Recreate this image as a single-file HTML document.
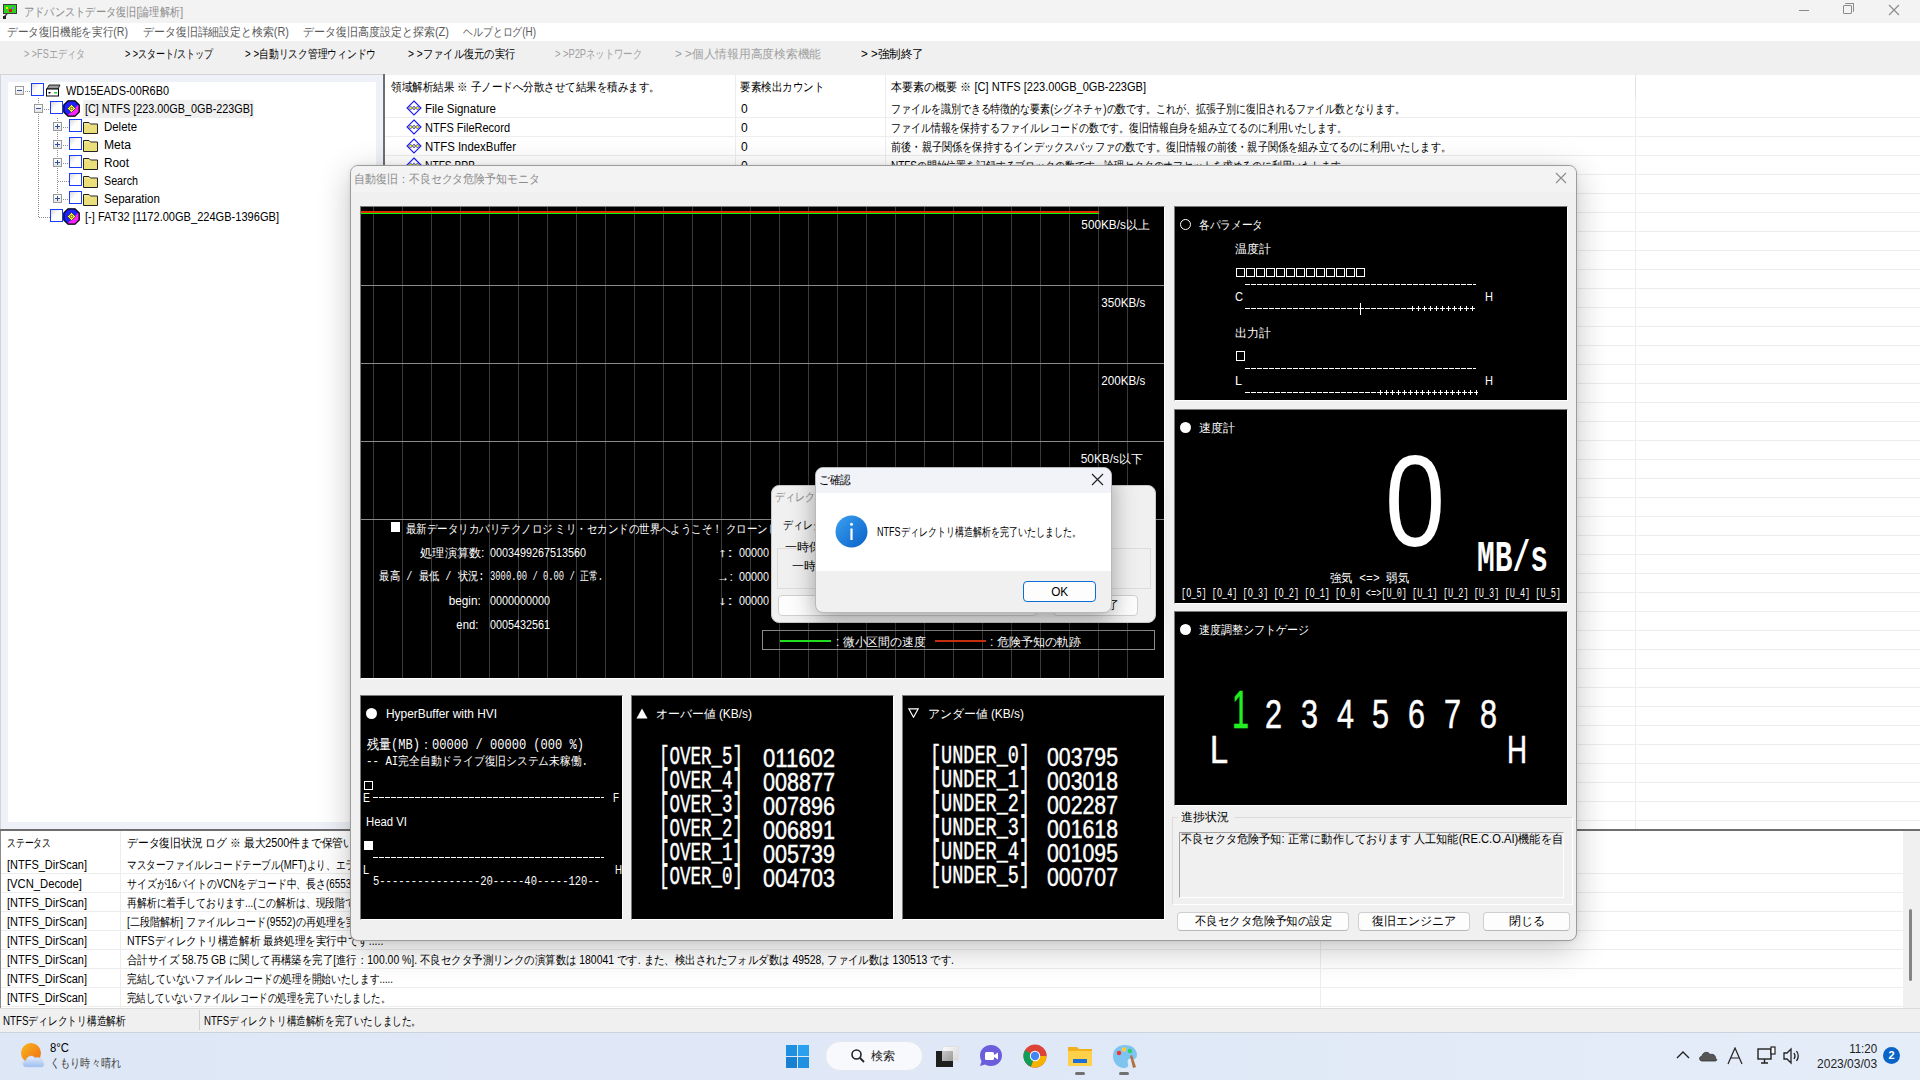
<!DOCTYPE html>
<html><head><meta charset="utf-8">
<style>
*{margin:0;padding:0;box-sizing:border-box}
html,body{width:1920px;height:1080px;overflow:hidden;background:#f0f0f0;font-family:"Liberation Sans",sans-serif;font-size:12px;color:#000;position:relative}
.a{position:absolute}
.t{position:absolute;white-space:nowrap;line-height:1}
</style></head><body>
<div class="a" style="left:0px;top:0px;width:1920px;height:23px;background:#f3f3f3"></div>
<div class="a" style="left:0px;top:23px;width:1920px;height:18px;background:#fff"></div>
<div class="a" style="left:0px;top:41px;width:1920px;height:33px;background:#f0f0f0"></div>
<svg class="a" style="left:2px;top:3px" width="16" height="16" viewBox="0 0 16 16"><rect x="1.5" y="1.5" width="13" height="9" fill="#2fd11f" stroke="#3a3a3a"/><rect x="4" y="4" width="2" height="2" fill="#ffe000"/><rect x="10" y="4" width="2" height="2" fill="#7a5cff"/><rect x="7" y="6" width="3" height="3" fill="#e01010"/><path d="M5 11 L2 14" stroke="#444" stroke-width="1.5"/><rect x="1" y="13" width="3" height="3" fill="#222"/></svg>
<div class="t" id="t0" style="left:24px;transform-origin:left center;top:5.5px;font-size:12px;font-family:'Liberation Sans',sans-serif;color:#8c8c8c;transform:scale(0.8518,1.0000);">アドバンストデータ復旧[論理解析]</div>
<div class="a" style="left:1799px;top:10px;width:10px;height:1px;background:#8a8a8a"></div>
<div class="a" style="left:1843px;top:5px;width:9px;height:9px;border:1px solid #8a8a8a;border-radius:1px"></div><div class="a" style="left:1845px;top:3px;width:9px;height:9px;border-top:1px solid #8a8a8a;border-right:1px solid #8a8a8a;border-radius:1px"></div>
<svg class="a" style="left:1888px;top:4px" width="12" height="12"><path d="M1 1L11 11M11 1L1 11" stroke="#8a8a8a" stroke-width="1.1"/></svg>
<div class="t" id="t1" style="left:7px;transform-origin:left center;top:26.0px;font-size:12px;font-family:'Liberation Sans',sans-serif;color:#5a5a5a;transform:scale(0.8853,1.0000);">データ復旧機能を実行(R)</div>
<div class="t" id="t2" style="left:143px;transform-origin:left center;top:26.0px;font-size:12px;font-family:'Liberation Sans',sans-serif;color:#5a5a5a;transform:scale(0.9087,1.0000);">データ復旧詳細設定と検索(R)</div>
<div class="t" id="t3" style="left:303px;transform-origin:left center;top:26.0px;font-size:12px;font-family:'Liberation Sans',sans-serif;color:#5a5a5a;transform:scale(0.9163,1.0000);">データ復旧高度設定と探索(Z)</div>
<div class="t" id="t4" style="left:463px;transform-origin:left center;top:26.0px;font-size:12px;font-family:'Liberation Sans',sans-serif;color:#5a5a5a;transform:scale(0.8233,1.0000);">ヘルプとログ(H)</div>
<div class="t" id="t5" style="left:24px;transform-origin:left center;top:47.5px;font-size:12px;font-family:'Liberation Sans',sans-serif;color:#a0a0a0;transform:scale(0.7560,1.0000);">&gt; &gt;FSエディタ</div>
<div class="t" id="t6" style="left:125px;transform-origin:left center;top:47.5px;font-size:12px;font-family:'Liberation Sans',sans-serif;color:#000;transform:scale(0.7542,1.0000);">&gt; &gt;スタート/ストップ</div>
<div class="t" id="t7" style="left:245px;transform-origin:left center;top:47.5px;font-size:12px;font-family:'Liberation Sans',sans-serif;color:#000;transform:scale(0.8119,1.0000);">&gt; &gt;自動リスク管理ウィンドウ</div>
<div class="t" id="t8" style="left:408px;transform-origin:left center;top:47.5px;font-size:12px;font-family:'Liberation Sans',sans-serif;color:#000;transform:scale(0.8535,1.0000);">&gt; &gt;ファイル復元の実行</div>
<div class="t" id="t9" style="left:555px;transform-origin:left center;top:47.5px;font-size:12px;font-family:'Liberation Sans',sans-serif;color:#a0a0a0;transform:scale(0.7766,1.0000);">&gt; &gt;P2Pネットワーク</div>
<div class="t" id="t10" style="left:675px;transform-origin:left center;top:47.5px;font-size:12px;font-family:'Liberation Sans',sans-serif;color:#a0a0a0;transform:scale(0.9775,1.0000);">&gt; &gt;個人情報用高度検索機能</div>
<div class="t" id="t11" style="left:861px;transform-origin:left center;top:47.5px;font-size:12px;font-family:'Liberation Sans',sans-serif;color:#000;transform:scale(0.9639,1.0000);">&gt; &gt;強制終了</div>
<div class="a" style="left:0px;top:74px;width:384px;height:1px;background:#d4d4d4"></div>
<div class="a" style="left:0px;top:75px;width:383px;height:754px;background:#eef1f7"></div>
<div class="a" style="left:8px;top:82px;width:368px;height:740px;background:#fff"></div>
<div class="a" style="left:0px;top:75px;width:1px;height:754px;background:#d4d4d4"></div>
<div class="a" style="left:383px;top:74px;width:2px;height:755px;background:#6e6e6e"></div>
<div class="a" style="left:385px;top:75px;width:1535px;height:754px;background:#fff"></div>
<div class="a" style="left:385px;top:117px;width:1535px;height:1px;background:#ededed"></div>
<div class="a" style="left:385px;top:136px;width:1535px;height:1px;background:#ededed"></div>
<div class="a" style="left:385px;top:155px;width:1535px;height:1px;background:#ededed"></div>
<div class="a" style="left:385px;top:174px;width:1535px;height:1px;background:#ededed"></div>
<div class="a" style="left:385px;top:193px;width:1535px;height:1px;background:#ededed"></div>
<div class="a" style="left:385px;top:212px;width:1535px;height:1px;background:#ededed"></div>
<div class="a" style="left:385px;top:231px;width:1535px;height:1px;background:#ededed"></div>
<div class="a" style="left:385px;top:250px;width:1535px;height:1px;background:#ededed"></div>
<div class="a" style="left:385px;top:269px;width:1535px;height:1px;background:#ededed"></div>
<div class="a" style="left:385px;top:288px;width:1535px;height:1px;background:#ededed"></div>
<div class="a" style="left:385px;top:307px;width:1535px;height:1px;background:#ededed"></div>
<div class="a" style="left:385px;top:326px;width:1535px;height:1px;background:#ededed"></div>
<div class="a" style="left:385px;top:345px;width:1535px;height:1px;background:#ededed"></div>
<div class="a" style="left:385px;top:364px;width:1535px;height:1px;background:#ededed"></div>
<div class="a" style="left:385px;top:383px;width:1535px;height:1px;background:#ededed"></div>
<div class="a" style="left:385px;top:402px;width:1535px;height:1px;background:#ededed"></div>
<div class="a" style="left:385px;top:421px;width:1535px;height:1px;background:#ededed"></div>
<div class="a" style="left:385px;top:440px;width:1535px;height:1px;background:#ededed"></div>
<div class="a" style="left:385px;top:459px;width:1535px;height:1px;background:#ededed"></div>
<div class="a" style="left:385px;top:478px;width:1535px;height:1px;background:#ededed"></div>
<div class="a" style="left:385px;top:497px;width:1535px;height:1px;background:#ededed"></div>
<div class="a" style="left:385px;top:516px;width:1535px;height:1px;background:#ededed"></div>
<div class="a" style="left:385px;top:535px;width:1535px;height:1px;background:#ededed"></div>
<div class="a" style="left:385px;top:554px;width:1535px;height:1px;background:#ededed"></div>
<div class="a" style="left:385px;top:573px;width:1535px;height:1px;background:#ededed"></div>
<div class="a" style="left:385px;top:592px;width:1535px;height:1px;background:#ededed"></div>
<div class="a" style="left:385px;top:611px;width:1535px;height:1px;background:#ededed"></div>
<div class="a" style="left:385px;top:630px;width:1535px;height:1px;background:#ededed"></div>
<div class="a" style="left:385px;top:649px;width:1535px;height:1px;background:#ededed"></div>
<div class="a" style="left:385px;top:668px;width:1535px;height:1px;background:#ededed"></div>
<div class="a" style="left:385px;top:687px;width:1535px;height:1px;background:#ededed"></div>
<div class="a" style="left:385px;top:706px;width:1535px;height:1px;background:#ededed"></div>
<div class="a" style="left:385px;top:725px;width:1535px;height:1px;background:#ededed"></div>
<div class="a" style="left:385px;top:744px;width:1535px;height:1px;background:#ededed"></div>
<div class="a" style="left:385px;top:763px;width:1535px;height:1px;background:#ededed"></div>
<div class="a" style="left:385px;top:782px;width:1535px;height:1px;background:#ededed"></div>
<div class="a" style="left:385px;top:801px;width:1535px;height:1px;background:#ededed"></div>
<div class="a" style="left:385px;top:820px;width:1535px;height:1px;background:#ededed"></div>
<div class="a" style="left:735px;top:75px;width:1px;height:754px;background:#ededed"></div>
<div class="a" style="left:885px;top:75px;width:1px;height:754px;background:#ededed"></div>
<div class="a" style="left:1635px;top:75px;width:1px;height:754px;background:#ededed"></div>
<div class="a" style="left:1635px;top:75px;width:1px;height:23px;background:#e4e4e4"></div>
<div class="t" id="t12" style="left:391px;transform-origin:left center;top:80.5px;font-size:12px;font-family:'Liberation Sans',sans-serif;color:#000;transform:scale(0.8772,1.0000);">領域解析結果 ※ 子ノードへ分散させて結果を積みます。</div>
<div class="t" id="t13" style="left:740px;transform-origin:left center;top:80.5px;font-size:12px;font-family:'Liberation Sans',sans-serif;color:#000;transform:scale(0.8750,1.0000);">要素検出カウント</div>
<div class="t" id="t14" style="left:891px;transform-origin:left center;top:80.5px;font-size:12px;font-family:'Liberation Sans',sans-serif;color:#000;transform:scale(0.9214,1.0000);">本要素の概要 ※ [C] NTFS [223.00GB_0GB-223GB]</div>
<svg class="a" style="left:406px;top:100px" width="16" height="16" viewBox="0 0 16 16"><path d="M8 1L15 8L8 15L1 8Z" fill="none" stroke="#1a1aff" stroke-width="1.1"/><path d="M2.5 8L4.5 6L6.5 8L8 6L9.5 8L11.5 6L13.5 8L11.5 10L9.5 8L8 10L6.5 8L4.5 10Z" fill="#f5f500" stroke="#1a1aff" stroke-width="0.7"/></svg>
<div class="t" id="t15" style="left:425px;transform-origin:left center;top:103.0px;font-size:12px;font-family:'Liberation Sans',sans-serif;color:#000;transform:scale(0.9589,1.0000);">File Signature</div>
<div class="t" id="t16" style="left:741px;transform-origin:left center;top:103.0px;font-size:12px;font-family:'Liberation Sans',sans-serif;color:#000;">0</div>
<div class="t" id="t17" style="left:891px;transform-origin:left center;top:103.0px;font-size:12px;font-family:'Liberation Sans',sans-serif;color:#000;transform:scale(0.8290,1.0000);">ファイルを識別できる特徴的な要素(シグネチャ)の数です。これが、拡張子別に復旧されるファイル数となります。</div>
<svg class="a" style="left:406px;top:119px" width="16" height="16" viewBox="0 0 16 16"><path d="M8 1L15 8L8 15L1 8Z" fill="none" stroke="#1a1aff" stroke-width="1.1"/><path d="M2.5 8L4.5 6L6.5 8L8 6L9.5 8L11.5 6L13.5 8L11.5 10L9.5 8L8 10L6.5 8L4.5 10Z" fill="#f5f500" stroke="#1a1aff" stroke-width="0.7"/></svg>
<div class="t" id="t18" style="left:425px;transform-origin:left center;top:122.0px;font-size:12px;font-family:'Liberation Sans',sans-serif;color:#000;transform:scale(0.9171,1.0000);">NTFS FileRecord</div>
<div class="t" id="t19" style="left:741px;transform-origin:left center;top:122.0px;font-size:12px;font-family:'Liberation Sans',sans-serif;color:#000;">0</div>
<div class="t" id="t20" style="left:891px;transform-origin:left center;top:122.0px;font-size:12px;font-family:'Liberation Sans',sans-serif;color:#000;transform:scale(0.8261,1.0000);">ファイル情報を保持するファイルレコードの数です。復旧情報自身を組み立てるのに利用いたします。</div>
<svg class="a" style="left:406px;top:138px" width="16" height="16" viewBox="0 0 16 16"><path d="M8 1L15 8L8 15L1 8Z" fill="none" stroke="#1a1aff" stroke-width="1.1"/><path d="M2.5 8L4.5 6L6.5 8L8 6L9.5 8L11.5 6L13.5 8L11.5 10L9.5 8L8 10L6.5 8L4.5 10Z" fill="#f5f500" stroke="#1a1aff" stroke-width="0.7"/></svg>
<div class="t" id="t21" style="left:425px;transform-origin:left center;top:141.0px;font-size:12px;font-family:'Liberation Sans',sans-serif;color:#000;transform:scale(0.9496,1.0000);">NTFS IndexBuffer</div>
<div class="t" id="t22" style="left:741px;transform-origin:left center;top:141.0px;font-size:12px;font-family:'Liberation Sans',sans-serif;color:#000;">0</div>
<div class="t" id="t23" style="left:891px;transform-origin:left center;top:141.0px;font-size:12px;font-family:'Liberation Sans',sans-serif;color:#000;transform:scale(0.8485,1.0000);">前後・親子関係を保持するインデックスバッファの数です。復旧情報の前後・親子関係を組み立てるのに利用いたします。</div>
<svg class="a" style="left:406px;top:157px" width="16" height="16" viewBox="0 0 16 16"><path d="M8 1L15 8L8 15L1 8Z" fill="none" stroke="#1a1aff" stroke-width="1.1"/><path d="M2.5 8L4.5 6L6.5 8L8 6L9.5 8L11.5 6L13.5 8L11.5 10L9.5 8L8 10L6.5 8L4.5 10Z" fill="#f5f500" stroke="#1a1aff" stroke-width="0.7"/></svg>
<div class="t" id="t24" style="left:425px;transform-origin:left center;top:160.0px;font-size:12px;font-family:'Liberation Sans',sans-serif;color:#000;transform:scale(0.8520,1.0000);">NTFS BPB</div>
<div class="t" id="t25" style="left:741px;transform-origin:left center;top:160.0px;font-size:12px;font-family:'Liberation Sans',sans-serif;color:#000;">0</div>
<div class="t" id="t26" style="left:891px;transform-origin:left center;top:160.0px;font-size:12px;font-family:'Liberation Sans',sans-serif;color:#000;transform:scale(0.8224,1.0000);">NTFSの開始位置を記録するブロックの数です。論理セクタのオフセットを求めるのに利用いたします。</div>
<div class="a" style="left:15px;top:86px;width:9px;height:9px;border:1px solid #9a9a9a;background:linear-gradient(#fff,#e4e4e4)"></div><div class="a" style="left:17px;top:90px;width:5px;height:1px;background:#3050a0"></div>
<div class="a" style="left:25px;top:91px;width:6px;height:1px;background:repeating-linear-gradient(90deg,#909090 0 1px,transparent 1px 2px)"></div>
<div class="a" style="left:31px;top:83px;width:13px;height:13px;border:1px solid #1a3cff;background:linear-gradient(135deg,#d8d8d8,#fff 45%)"></div>
<svg class="a" style="left:46px;top:84px" width="15" height="13" viewBox="0 0 15 13"><path d="M3 1H14L12 5H1Z" fill="#999" stroke="#000" stroke-width="0.8"/><rect x="0.5" y="5" width="12" height="7" fill="#fff" stroke="#000"/><rect x="8" y="8" width="3" height="1.5" fill="#20d020"/><rect x="2.5" y="8" width="2" height="1.5" fill="#000"/></svg>
<div class="t" id="t27" style="left:66px;transform-origin:left center;top:85.0px;font-size:12px;font-family:'Liberation Sans',sans-serif;color:#000;transform:scale(0.9084,1.0000);">WD15EADS-00R6B0</div>
<div class="a" style="left:38px;top:98px;width:1px;height:120px;background:repeating-linear-gradient(180deg,#909090 0 1px,transparent 1px 2px)"></div>
<div class="a" style="left:34px;top:104px;width:9px;height:9px;border:1px solid #9a9a9a;background:linear-gradient(#fff,#e4e4e4)"></div><div class="a" style="left:36px;top:108px;width:5px;height:1px;background:#3050a0"></div>
<div class="a" style="left:44px;top:109px;width:6px;height:1px;background:repeating-linear-gradient(90deg,#909090 0 1px,transparent 1px 2px)"></div>
<div class="a" style="left:83px;top:100px;width:171px;height:18px;background:#f0f0f0"></div>
<div class="a" style="left:50px;top:101px;width:13px;height:13px;border:1px solid #1a3cff;background:linear-gradient(135deg,#d8d8d8,#fff 45%)"></div>
<svg class="a" style="left:63px;top:100px" width="17" height="17" viewBox="0 0 17 17"><defs><clipPath id="oc63100"><path d="M5 0.8H12L16.2 5V12L12 16.2H5L0.8 12V5Z"/></clipPath></defs><g clip-path="url(#oc63100)"><rect width="17" height="17" fill="#2020ff"/><path d="M17 3L3 17H17Z" fill="#ff20ff"/></g><path d="M5 0.8H12L16.2 5V12L12 16.2H5L0.8 12V5Z" fill="none" stroke="#000" stroke-width="1.3"/><path d="M8.5 4.5L12.5 8.5L8.5 12.5L4.5 8.5Z" fill="#ffff30" stroke="#333" stroke-width="0.8"/><circle cx="8.5" cy="8.5" r="1.3" fill="none" stroke="#333" stroke-width="0.8"/></svg>
<div class="t" id="t28" style="left:85px;transform-origin:left center;top:103.0px;font-size:12px;font-family:'Liberation Sans',sans-serif;color:#000;transform:scale(0.9028,1.0000);">[C] NTFS [223.00GB_0GB-223GB]</div>
<div class="a" style="left:57px;top:118px;width:1px;height:82px;background:repeating-linear-gradient(180deg,#909090 0 1px,transparent 1px 2px)"></div>
<div class="a" style="left:53px;top:122px;width:9px;height:9px;border:1px solid #9a9a9a;background:linear-gradient(#fff,#e4e4e4)"></div><div class="a" style="left:55px;top:126px;width:5px;height:1px;background:#3050a0"></div><div class="a" style="left:57px;top:124px;width:1px;height:5px;background:#3050a0"></div>
<div class="a" style="left:63px;top:127px;width:6px;height:1px;background:repeating-linear-gradient(90deg,#909090 0 1px,transparent 1px 2px)"></div>
<div class="a" style="left:69px;top:119px;width:13px;height:13px;border:1px solid #1a3cff;background:linear-gradient(135deg,#d8d8d8,#fff 45%)"></div>
<svg class="a" style="left:83px;top:120px" width="16" height="14" viewBox="0 0 16 14"><path d="M0.5 2.5H6L7.5 4H14.5V13.5H0.5Z" fill="#f0e890" stroke="#222"/><rect x="1" y="5" width="13" height="8" fill="#eadf7a"/></svg>
<div class="t" id="t29" style="left:104px;transform-origin:left center;top:121.0px;font-size:12px;font-family:'Liberation Sans',sans-serif;color:#000;transform:scale(0.9514,1.0000);">Delete</div>
<div class="a" style="left:53px;top:140px;width:9px;height:9px;border:1px solid #9a9a9a;background:linear-gradient(#fff,#e4e4e4)"></div><div class="a" style="left:55px;top:144px;width:5px;height:1px;background:#3050a0"></div><div class="a" style="left:57px;top:142px;width:1px;height:5px;background:#3050a0"></div>
<div class="a" style="left:63px;top:145px;width:6px;height:1px;background:repeating-linear-gradient(90deg,#909090 0 1px,transparent 1px 2px)"></div>
<div class="a" style="left:69px;top:137px;width:13px;height:13px;border:1px solid #1a3cff;background:linear-gradient(135deg,#d8d8d8,#fff 45%)"></div>
<svg class="a" style="left:83px;top:138px" width="16" height="14" viewBox="0 0 16 14"><path d="M0.5 2.5H6L7.5 4H14.5V13.5H0.5Z" fill="#f0e890" stroke="#222"/><rect x="1" y="5" width="13" height="8" fill="#eadf7a"/></svg>
<div class="t" id="t30" style="left:104px;transform-origin:left center;top:139.0px;font-size:12px;font-family:'Liberation Sans',sans-serif;color:#000;transform:scale(1.0117,1.0000);">Meta</div>
<div class="a" style="left:53px;top:158px;width:9px;height:9px;border:1px solid #9a9a9a;background:linear-gradient(#fff,#e4e4e4)"></div><div class="a" style="left:55px;top:162px;width:5px;height:1px;background:#3050a0"></div><div class="a" style="left:57px;top:160px;width:1px;height:5px;background:#3050a0"></div>
<div class="a" style="left:63px;top:163px;width:6px;height:1px;background:repeating-linear-gradient(90deg,#909090 0 1px,transparent 1px 2px)"></div>
<div class="a" style="left:69px;top:155px;width:13px;height:13px;border:1px solid #1a3cff;background:linear-gradient(135deg,#d8d8d8,#fff 45%)"></div>
<svg class="a" style="left:83px;top:156px" width="16" height="14" viewBox="0 0 16 14"><path d="M0.5 2.5H6L7.5 4H14.5V13.5H0.5Z" fill="#f0e890" stroke="#222"/><rect x="1" y="5" width="13" height="8" fill="#eadf7a"/></svg>
<div class="t" id="t31" style="left:104px;transform-origin:left center;top:157.0px;font-size:12px;font-family:'Liberation Sans',sans-serif;color:#000;transform:scale(0.9858,1.0000);">Root</div>
<div class="a" style="left:58px;top:181px;width:11px;height:1px;background:repeating-linear-gradient(90deg,#909090 0 1px,transparent 1px 2px)"></div>
<div class="a" style="left:69px;top:173px;width:13px;height:13px;border:1px solid #1a3cff;background:linear-gradient(135deg,#d8d8d8,#fff 45%)"></div>
<svg class="a" style="left:83px;top:174px" width="16" height="14" viewBox="0 0 16 14"><path d="M0.5 2.5H6L7.5 4H14.5V13.5H0.5Z" fill="#f0e890" stroke="#222"/><rect x="1" y="5" width="13" height="8" fill="#eadf7a"/></svg>
<div class="t" id="t32" style="left:104px;transform-origin:left center;top:175.0px;font-size:12px;font-family:'Liberation Sans',sans-serif;color:#000;transform:scale(0.8940,1.0000);">Search</div>
<div class="a" style="left:53px;top:194px;width:9px;height:9px;border:1px solid #9a9a9a;background:linear-gradient(#fff,#e4e4e4)"></div><div class="a" style="left:55px;top:198px;width:5px;height:1px;background:#3050a0"></div><div class="a" style="left:57px;top:196px;width:1px;height:5px;background:#3050a0"></div>
<div class="a" style="left:63px;top:199px;width:6px;height:1px;background:repeating-linear-gradient(90deg,#909090 0 1px,transparent 1px 2px)"></div>
<div class="a" style="left:69px;top:191px;width:13px;height:13px;border:1px solid #1a3cff;background:linear-gradient(135deg,#d8d8d8,#fff 45%)"></div>
<svg class="a" style="left:83px;top:192px" width="16" height="14" viewBox="0 0 16 14"><path d="M0.5 2.5H6L7.5 4H14.5V13.5H0.5Z" fill="#f0e890" stroke="#222"/><rect x="1" y="5" width="13" height="8" fill="#eadf7a"/></svg>
<div class="t" id="t33" style="left:104px;transform-origin:left center;top:193.0px;font-size:12px;font-family:'Liberation Sans',sans-serif;color:#000;transform:scale(0.9647,1.0000);">Separation</div>
<div class="a" style="left:39px;top:217px;width:11px;height:1px;background:repeating-linear-gradient(90deg,#909090 0 1px,transparent 1px 2px)"></div>
<div class="a" style="left:50px;top:209px;width:13px;height:13px;border:1px solid #1a3cff;background:linear-gradient(135deg,#d8d8d8,#fff 45%)"></div>
<svg class="a" style="left:63px;top:208px" width="17" height="17" viewBox="0 0 17 17"><defs><clipPath id="oc63208"><path d="M5 0.8H12L16.2 5V12L12 16.2H5L0.8 12V5Z"/></clipPath></defs><g clip-path="url(#oc63208)"><rect width="17" height="17" fill="#2020ff"/><path d="M17 3L3 17H17Z" fill="#ff20ff"/></g><path d="M5 0.8H12L16.2 5V12L12 16.2H5L0.8 12V5Z" fill="none" stroke="#000" stroke-width="1.3"/><path d="M8.5 4.5L12.5 8.5L8.5 12.5L4.5 8.5Z" fill="#ffff30" stroke="#333" stroke-width="0.8"/><circle cx="8.5" cy="8.5" r="1.3" fill="none" stroke="#333" stroke-width="0.8"/></svg>
<div class="t" id="t34" style="left:85px;transform-origin:left center;top:211.0px;font-size:12px;font-family:'Liberation Sans',sans-serif;color:#000;transform:scale(0.9222,1.0000);">[-] FAT32 [1172.00GB_224GB-1396GB]</div>
<div class="a" style="left:0px;top:829px;width:1920px;height:2px;background:#6e6e6e"></div>
<div class="a" style="left:0px;top:831px;width:1920px;height:177px;background:#fff"></div>
<div class="a" style="left:0px;top:831px;width:1px;height:177px;background:#8a8a8a"></div>
<div class="a" style="left:1px;top:873px;width:1902px;height:1px;background:#ededed"></div>
<div class="a" style="left:1px;top:892px;width:1902px;height:1px;background:#ededed"></div>
<div class="a" style="left:1px;top:911px;width:1902px;height:1px;background:#ededed"></div>
<div class="a" style="left:1px;top:930px;width:1902px;height:1px;background:#ededed"></div>
<div class="a" style="left:1px;top:949px;width:1902px;height:1px;background:#ededed"></div>
<div class="a" style="left:1px;top:968px;width:1902px;height:1px;background:#ededed"></div>
<div class="a" style="left:1px;top:987px;width:1902px;height:1px;background:#ededed"></div>
<div class="a" style="left:1px;top:1006px;width:1902px;height:1px;background:#ededed"></div>
<div class="a" style="left:120px;top:831px;width:1px;height:177px;background:#ededed"></div>
<div class="a" style="left:1320px;top:855px;width:1px;height:153px;background:#ededed"></div>
<div class="t" id="t35" style="left:7px;transform-origin:left center;top:836.5px;font-size:12px;font-family:'Liberation Sans',sans-serif;color:#000;transform:scale(0.7333,1.0000);">ステータス</div>
<div class="t" id="t36" style="left:127px;transform-origin:left center;top:836.5px;font-size:12px;font-family:'Liberation Sans',sans-serif;color:#000;transform:scale(0.8979,1.0000);">データ復旧状況 ログ ※ 最大2500件まで保管いたします</div>
<div class="t" id="t37" style="left:7px;transform-origin:left center;top:858.5px;font-size:12px;font-family:'Liberation Sans',sans-serif;color:#000;transform:scale(0.9158,1.0000);">[NTFS_DirScan]</div>
<div class="t" id="t38" style="left:127px;transform-origin:left center;top:858.5px;font-size:12px;font-family:'Liberation Sans',sans-serif;color:#000;transform:scale(0.8000,1.0000);">マスターファイルレコードテーブル(MFT)より、エラーを検出いたしました</div>
<div class="t" id="t39" style="left:7px;transform-origin:left center;top:877.5px;font-size:12px;font-family:'Liberation Sans',sans-serif;color:#000;transform:scale(0.9370,1.0000);">[VCN_Decode]</div>
<div class="t" id="t40" style="left:127px;transform-origin:left center;top:877.5px;font-size:12px;font-family:'Liberation Sans',sans-serif;color:#000;transform:scale(0.8200,1.0000);">サイズが16バイトのVCNをデコード中、長さ(65536)</div>
<div class="t" id="t41" style="left:7px;transform-origin:left center;top:896.5px;font-size:12px;font-family:'Liberation Sans',sans-serif;color:#000;transform:scale(0.9158,1.0000);">[NTFS_DirScan]</div>
<div class="t" id="t42" style="left:127px;transform-origin:left center;top:896.5px;font-size:12px;font-family:'Liberation Sans',sans-serif;color:#000;transform:scale(0.8200,1.0000);">再解析に着手しております...(この解析は、現段階では</div>
<div class="t" id="t43" style="left:7px;transform-origin:left center;top:915.5px;font-size:12px;font-family:'Liberation Sans',sans-serif;color:#000;transform:scale(0.9158,1.0000);">[NTFS_DirScan]</div>
<div class="t" id="t44" style="left:127px;transform-origin:left center;top:915.5px;font-size:12px;font-family:'Liberation Sans',sans-serif;color:#000;transform:scale(0.8400,1.0000);">[二段階解析] ファイルレコード(9552)の再処理を実行</div>
<div class="t" id="t45" style="left:7px;transform-origin:left center;top:934.5px;font-size:12px;font-family:'Liberation Sans',sans-serif;color:#000;transform:scale(0.9158,1.0000);">[NTFS_DirScan]</div>
<div class="t" id="t46" style="left:127px;transform-origin:left center;top:934.5px;font-size:12px;font-family:'Liberation Sans',sans-serif;color:#000;transform:scale(0.8800,1.0000);">NTFSディレクトリ構造解析 最終処理を実行中です.....</div>
<div class="t" id="t47" style="left:7px;transform-origin:left center;top:953.5px;font-size:12px;font-family:'Liberation Sans',sans-serif;color:#000;transform:scale(0.9158,1.0000);">[NTFS_DirScan]</div>
<div class="t" id="t48" style="left:127px;transform-origin:left center;top:953.5px;font-size:12px;font-family:'Liberation Sans',sans-serif;color:#000;transform:scale(0.8685,1.0000);">合計サイズ 58.75 GB に関して再構築を完了[進行：100.00 %]. 不良セクタ予測リンクの演算数は 180041 です. また、検出されたフォルダ数は 49528, ファイル数は 130513 です.</div>
<div class="t" id="t49" style="left:7px;transform-origin:left center;top:972.5px;font-size:12px;font-family:'Liberation Sans',sans-serif;color:#000;transform:scale(0.9158,1.0000);">[NTFS_DirScan]</div>
<div class="t" id="t50" style="left:127px;transform-origin:left center;top:972.5px;font-size:12px;font-family:'Liberation Sans',sans-serif;color:#000;transform:scale(0.8093,1.0000);">完結していないファイルレコードの処理を開始いたします.....</div>
<div class="t" id="t51" style="left:7px;transform-origin:left center;top:991.5px;font-size:12px;font-family:'Liberation Sans',sans-serif;color:#000;transform:scale(0.9158,1.0000);">[NTFS_DirScan]</div>
<div class="t" id="t52" style="left:127px;transform-origin:left center;top:991.5px;font-size:12px;font-family:'Liberation Sans',sans-serif;color:#000;transform:scale(0.7827,1.0000);">完結していないファイルレコードの処理を完了いたしました。</div>
<div class="a" style="left:1903px;top:831px;width:17px;height:177px;background:#f0f0f0"></div>
<div class="a" style="left:1909px;top:909px;width:3px;height:72px;background:#858585;border-radius:2px"></div>
<div class="a" style="left:0px;top:1008px;width:1920px;height:24px;background:#f0f0f0"></div>
<div class="a" style="left:0px;top:1008px;width:1920px;height:1px;background:#dadada"></div>
<div class="a" style="left:199px;top:1010px;width:1px;height:20px;background:#d0d0d0"></div>
<div class="t" id="t53" style="left:3px;transform-origin:left center;top:1014.5px;font-size:12px;font-family:'Liberation Sans',sans-serif;color:#000;transform:scale(0.8127,1.0000);">NTFSディレクトリ構造解析</div>
<div class="t" id="t54" style="left:204px;transform-origin:left center;top:1014.5px;font-size:12px;font-family:'Liberation Sans',sans-serif;color:#000;transform:scale(0.7997,1.0000);">NTFSディレクトリ構造解析を完了いたしました。</div>
<div class="a" style="left:0px;top:1032px;width:1920px;height:48px;background:linear-gradient(90deg,#dde7f5 0%,#e0e8f7 35%,#dfe8f6 55%,#e5edf9 100%);border-top:1px solid #cbd3dd"></div>
<svg class="a" style="left:18px;top:1040px" width="28" height="30" viewBox="0 0 28 30"><defs><linearGradient id="sg" x1="0" y1="0" x2="1" y2="1"><stop offset="0" stop-color="#f8b820"/><stop offset="1" stop-color="#f06a10"/></linearGradient><linearGradient id="cg" x1="0" y1="0" x2="0" y2="1"><stop offset="0" stop-color="#e4eefc"/><stop offset="1" stop-color="#9dbdf0"/></linearGradient></defs><circle cx="13" cy="13" r="10" fill="url(#sg)"/><path d="M8 27C4 27 4 21 8 20.5C8.5 16 14.5 14.5 17 18C19.5 16.5 24 18 24 21.5C26.5 22 26.5 27 23.5 27Z" fill="url(#cg)" stroke="#b8cff2" stroke-width="0.6"/></svg>
<div class="t" id="t55" style="left:50px;transform-origin:left center;top:1042.0px;font-size:12px;font-family:'Liberation Sans',sans-serif;color:#000;transform:scale(0.9434,1.0000);">8°C</div>
<div class="t" id="t56" style="left:50px;transform-origin:left center;top:1057.0px;font-size:12px;font-family:'Liberation Sans',sans-serif;color:#444;transform:scale(0.8452,1.0000);">くもり時々晴れ</div>
<svg class="a" style="left:786px;top:1045px" width="23" height="23" viewBox="0 0 23 23"><rect x="0" y="0" width="11" height="11" fill="#1e90e0"/><rect x="12" y="0" width="11" height="11" fill="#2aa0f0"/><rect x="0" y="12" width="11" height="11" fill="#1880d0"/><rect x="12" y="12" width="11" height="11" fill="#2090e0"/></svg>
<div class="a" style="left:825px;top:1041px;width:98px;height:30px;border-radius:15px;background:#f7f9fc;border:1px solid #e3e8ef"></div>
<svg class="a" style="left:851px;top:1049px" width="14" height="14" viewBox="0 0 14 14"><circle cx="5.5" cy="5.5" r="4.5" fill="none" stroke="#222" stroke-width="1.6"/><path d="M9 9L13 13" stroke="#222" stroke-width="1.8"/></svg>
<div class="t" id="t57" style="left:871px;transform-origin:left center;top:1050.0px;font-size:12px;font-family:'Liberation Sans',sans-serif;color:#222;">検索</div>
<div class="a" style="left:942px;top:1046px;width:17px;height:15px;background:linear-gradient(135deg,#fafafa,#d8d8d8);border:1px solid #e0e0e0"></div><div class="a" style="left:936px;top:1051px;width:17px;height:16px;background:#1e1e1e"></div><div class="a" style="left:942px;top:1051px;width:11px;height:10px;background:linear-gradient(135deg,#c8c8c8,#9a9a9a)"></div>
<svg class="a" style="left:979px;top:1044px" width="24" height="24" viewBox="0 0 24 24"><path d="M12 1C18 1 23 5.5 23 11.5S18 22 12 22C10 22 8 21.5 6 20.5L1 22L2.5 17.5C1.5 15.5 1 13.5 1 11.5C1 5.5 6 1 12 1Z" fill="#6b5ddb"/><rect x="6" y="8" width="9" height="8" rx="1.5" fill="#fff"/><path d="M15 11L19 8.5V15.5L15 13Z" fill="#fff"/></svg>
<svg class="a" style="left:1023px;top:1044px" width="24" height="24" viewBox="0 0 24 24"><circle cx="12" cy="12" r="11.5" fill="#db4437"/><path d="M12 12L2 6.2A11.5 11.5 0 0 0 8 22.8Z" fill="#0f9d58"/><path d="M12 12L8 22.8A11.5 11.5 0 0 0 23.5 12H12Z" fill="#f4b400"/><path d="M12 12L23.5 12A11.5 11.5 0 0 0 22 6.2Z" fill="#db4437"/><circle cx="12" cy="12" r="5.2" fill="#fff"/><circle cx="12" cy="12" r="4.2" fill="#4285f4"/></svg>
<svg class="a" style="left:1067px;top:1044px" width="26" height="24" viewBox="0 0 26 24"><path d="M1 3H10L12 5H25V22H1Z" fill="#f2b01e"/><rect x="1" y="7" width="24" height="15" fill="#ffd04a"/><rect x="6" y="15" width="14" height="4" fill="#1e6fd9"/></svg>
<div class="a" style="left:1075px;top:1072px;width:10px;height:3px;background:#707070;border-radius:2px"></div>
<svg class="a" style="left:1112px;top:1043px" width="26" height="26" viewBox="0 0 26 26"><path d="M13 2C20 2 25 6 25 12C25 16 22 17 19 16C16 15 15 18 16 21C17 24 14 25 12 25C6 25 1 20 1 13C1 6 6 2 13 2Z" fill="#7ec4f0"/><circle cx="7" cy="10" r="2.2" fill="#e33"/><circle cx="12" cy="6.5" r="2.2" fill="#fc3"/><circle cx="18" cy="8" r="2.2" fill="#3c6"/><path d="M20 12L24 24L21 25L18 13Z" fill="#b07040"/></svg>
<div class="a" style="left:1119px;top:1072px;width:10px;height:3px;background:#707070;border-radius:2px"></div>
<svg class="a" style="left:1676px;top:1050px" width="14" height="10"><path d="M1 8L7 2L13 8" fill="none" stroke="#222" stroke-width="1.4"/></svg>
<svg class="a" style="left:1698px;top:1048px" width="20" height="14" viewBox="0 0 20 14"><path d="M4 13C1 13 0.5 8.5 4 8.2C4.5 4 10 3 12 6.5C15 5.5 18 7.5 17.5 10.5C19.5 11 19 13 17 13Z" fill="#555" stroke="#333" stroke-width="0.8"/></svg>
<svg class="a" style="left:1727px;top:1047px" width="16" height="18" viewBox="0 0 16 18"><path d="M1 17L8 1L15 17M3.8 11H12.2" fill="none" stroke="#222" stroke-width="1.2"/></svg>
<svg class="a" style="left:1757px;top:1046px" width="20" height="20" viewBox="0 0 20 20"><rect x="1" y="3" width="13" height="10" fill="none" stroke="#222" stroke-width="1.4"/><path d="M7.5 13V17M4 17H11" stroke="#222" stroke-width="1.4"/><rect x="14" y="1" width="4" height="7" fill="#fff" stroke="#222" stroke-width="1.2"/></svg>
<svg class="a" style="left:1782px;top:1047px" width="20" height="18" viewBox="0 0 20 18"><path d="M2 6H5L9 2V16L5 12H2Z" fill="none" stroke="#222" stroke-width="1.3"/><path d="M12 6Q14 9 12 12M14.5 4Q18 9 14.5 14" fill="none" stroke="#222" stroke-width="1.3"/></svg>
<div class="t" id="t58" style="right:43px;transform-origin:right center;top:1042.5px;font-size:12px;font-family:'Liberation Sans',sans-serif;color:#222;transform:scale(0.9609,1.0000);">11:20</div>
<div class="t" id="t59" style="right:43px;transform-origin:right center;top:1057.5px;font-size:12px;font-family:'Liberation Sans',sans-serif;color:#222;transform:scale(0.9990,1.0000);">2023/03/03</div>
<div class="a" style="left:1883px;top:1047px;width:17px;height:17px;border-radius:50%;background:#0a64c8;color:#fff;font-size:11px;line-height:17px;text-align:center;font-weight:bold">2</div>
<div class="a" style="left:350px;top:165px;width:1227px;height:776px;background:#f0f0f0;border:1px solid #9c9c9c;border-radius:8px;box-shadow:0 8px 32px rgba(0,0,0,.24),0 0 4px rgba(0,0,0,.08)"></div>
<div class="a" style="left:351px;top:166px;width:1225px;height:26px;background:#f3f3f3;border-radius:7px 7px 0 0"></div>
<div class="t" id="t60" style="left:354px;transform-origin:left center;top:172.5px;font-size:12px;font-family:'Liberation Sans',sans-serif;color:#8c8c8c;transform:scale(0.9118,1.0000);">自動復旧：不良セクタ危険予知モニタ</div>
<svg class="a" style="left:1555px;top:172px" width="12" height="12"><path d="M1 1L11 11M11 1L1 11" stroke="#8a8a8a" stroke-width="1.1"/></svg>
<div class="a" style="left:360px;top:206px;width:805px;height:473px;background:#000;border-left:1px solid #7a7a7a;border-top:1px solid #7a7a7a;border-right:1px solid #fff;border-bottom:1px solid #fff"></div>
<div class="a" style="left:373px;top:207px;width:1px;height:471px;background:#3a3a3a"></div><div class="a" style="left:402px;top:207px;width:1px;height:471px;background:#3a3a3a"></div><div class="a" style="left:431px;top:207px;width:1px;height:471px;background:#3a3a3a"></div><div class="a" style="left:460px;top:207px;width:1px;height:471px;background:#3a3a3a"></div><div class="a" style="left:489px;top:207px;width:1px;height:471px;background:#3a3a3a"></div><div class="a" style="left:518px;top:207px;width:1px;height:471px;background:#3a3a3a"></div><div class="a" style="left:547px;top:207px;width:1px;height:471px;background:#3a3a3a"></div><div class="a" style="left:576px;top:207px;width:1px;height:471px;background:#3a3a3a"></div><div class="a" style="left:605px;top:207px;width:1px;height:471px;background:#3a3a3a"></div><div class="a" style="left:634px;top:207px;width:1px;height:471px;background:#3a3a3a"></div><div class="a" style="left:663px;top:207px;width:1px;height:471px;background:#3a3a3a"></div><div class="a" style="left:692px;top:207px;width:1px;height:471px;background:#3a3a3a"></div><div class="a" style="left:721px;top:207px;width:1px;height:471px;background:#3a3a3a"></div><div class="a" style="left:750px;top:207px;width:1px;height:471px;background:#3a3a3a"></div><div class="a" style="left:779px;top:207px;width:1px;height:471px;background:#3a3a3a"></div><div class="a" style="left:808px;top:207px;width:1px;height:471px;background:#3a3a3a"></div><div class="a" style="left:837px;top:207px;width:1px;height:471px;background:#3a3a3a"></div><div class="a" style="left:866px;top:207px;width:1px;height:471px;background:#3a3a3a"></div><div class="a" style="left:895px;top:207px;width:1px;height:471px;background:#3a3a3a"></div><div class="a" style="left:924px;top:207px;width:1px;height:471px;background:#3a3a3a"></div><div class="a" style="left:953px;top:207px;width:1px;height:471px;background:#3a3a3a"></div><div class="a" style="left:982px;top:207px;width:1px;height:471px;background:#3a3a3a"></div><div class="a" style="left:1011px;top:207px;width:1px;height:471px;background:#3a3a3a"></div><div class="a" style="left:1040px;top:207px;width:1px;height:471px;background:#3a3a3a"></div><div class="a" style="left:1069px;top:207px;width:1px;height:471px;background:#3a3a3a"></div><div class="a" style="left:1098px;top:207px;width:1px;height:471px;background:#3a3a3a"></div><div class="a" style="left:1127px;top:207px;width:1px;height:471px;background:#3a3a3a"></div>
<div class="a" style="left:361px;top:285px;width:803px;height:1px;background:#8a8a8a"></div>
<div class="a" style="left:361px;top:363px;width:803px;height:1px;background:#8a8a8a"></div>
<div class="a" style="left:361px;top:441px;width:803px;height:1px;background:#8a8a8a"></div>
<div class="a" style="left:361px;top:519px;width:803px;height:1px;background:#8a8a8a"></div>
<div class="a" style="left:361px;top:211px;width:738px;height:2px;background:#e03000"></div>
<div class="a" style="left:361px;top:213px;width:738px;height:1px;background:#00ff00"></div>
<div class="t" id="t61" style="right:771px;transform-origin:right center;top:218.5px;font-size:12px;font-family:'Liberation Sans',sans-serif;color:#fff;transform:scale(0.9802,1.0000);">500KB/s以上</div>
<div class="t" id="t62" style="right:775px;transform-origin:right center;top:296.5px;font-size:12px;font-family:'Liberation Sans',sans-serif;color:#fff;transform:scale(0.9697,1.0000);">350KB/s</div>
<div class="t" id="t63" style="right:775px;transform-origin:right center;top:374.5px;font-size:12px;font-family:'Liberation Sans',sans-serif;color:#fff;transform:scale(0.9697,1.0000);">200KB/s</div>
<div class="t" id="t64" style="right:777px;transform-origin:right center;top:452.5px;font-size:12px;font-family:'Liberation Sans',sans-serif;color:#fff;transform:scale(0.9888,1.0000);">50KB/s以下</div>
<div class="a" style="left:391px;top:522px;width:9px;height:10px;background:#fff"></div>
<div class="t" id="t65" style="left:406px;transform-origin:left center;top:523.0px;font-size:12px;font-family:'Liberation Sans',sans-serif;color:#fff;transform:scale(0.8719,1.0000);">最新データリカバリテクノロジ ミリ・セカンドの世界へようこそ！ クローンし</div>
<div class="t" id="t66" style="right:1436px;transform-origin:right center;top:547.0px;font-size:12px;font-family:'Liberation Sans',sans-serif;color:#fff;transform:scale(1.0104,1.0000);">処理演算数:</div>
<div class="t" id="t67" style="left:490px;transform-origin:left center;top:547.0px;font-size:12px;font-family:'Liberation Sans',sans-serif;color:#fff;transform:scale(0.8990,1.0000);">0003499267513560</div>
<div class="t" id="t68" style="right:1436px;transform-origin:right center;top:571.0px;font-size:12px;font-family:'Liberation Mono',monospace;color:#fff;transform:scale(0.8577,1.0000);">最高 / 最低 / 状況:</div>
<div class="t" id="t69" style="left:490px;transform-origin:left center;top:571.0px;font-size:12px;font-family:'Liberation Mono',monospace;color:#fff;transform:scale(0.7356,1.0000);">3000.00 / 0.00 / 正常.</div>
<div class="t" id="t70" style="right:1439px;transform-origin:right center;top:595.0px;font-size:12px;font-family:'Liberation Sans',sans-serif;color:#fff;transform:scale(0.9785,1.0000);">begin:</div>
<div class="t" id="t71" style="right:1442px;transform-origin:right center;top:619.0px;font-size:12px;font-family:'Liberation Sans',sans-serif;color:#fff;transform:scale(0.9418,1.0000);">end:</div>
<div class="t" id="t72" style="left:490px;transform-origin:left center;top:595.0px;font-size:12px;font-family:'Liberation Sans',sans-serif;color:#fff;transform:scale(0.8989,1.0000);">0000000000</div>
<div class="t" id="t73" style="left:490px;transform-origin:left center;top:619.0px;font-size:12px;font-family:'Liberation Sans',sans-serif;color:#fff;transform:scale(0.8989,1.0000);">0005432561</div>
<div class="t" id="t74" style="left:717px;transform-origin:left center;top:547.0px;font-size:12px;font-family:'Liberation Sans',sans-serif;color:#fff;transform:scale(1.7124,1.0000);">↑:</div>
<div class="t" id="t75" style="left:739px;transform-origin:left center;top:547.0px;font-size:12px;font-family:'Liberation Sans',sans-serif;color:#fff;transform:scale(0.8989,1.0000);">00000</div>
<div class="t" id="t76" style="left:717px;transform-origin:left center;top:571.0px;font-size:12px;font-family:'Liberation Sans',sans-serif;color:#fff;transform:scale(1.0428,1.0000);">→:</div>
<div class="t" id="t77" style="left:739px;transform-origin:left center;top:571.0px;font-size:12px;font-family:'Liberation Sans',sans-serif;color:#fff;transform:scale(0.8989,1.0000);">00000</div>
<div class="t" id="t78" style="left:717px;transform-origin:left center;top:595.0px;font-size:12px;font-family:'Liberation Sans',sans-serif;color:#fff;transform:scale(1.7124,1.0000);">↓:</div>
<div class="t" id="t79" style="left:739px;transform-origin:left center;top:595.0px;font-size:12px;font-family:'Liberation Sans',sans-serif;color:#fff;transform:scale(0.8989,1.0000);">00000</div>
<div class="a" style="left:762px;top:630px;width:393px;height:20px;border:1px solid #8c8c8c"></div>
<div class="a" style="left:780px;top:640px;width:51px;height:2px;background:#20e020"></div>
<div class="t" id="t80" style="left:836px;transform-origin:left center;top:636.0px;font-size:12px;font-family:'Liberation Sans',sans-serif;color:#fff;transform:scale(0.9926,1.0000);">: 微小区間の速度</div>
<div class="a" style="left:935px;top:640px;width:51px;height:2px;background:#c83010"></div>
<div class="t" id="t81" style="left:990px;transform-origin:left center;top:636.0px;font-size:12px;font-family:'Liberation Sans',sans-serif;color:#fff;transform:scale(1.0036,1.0000);">: 危険予知の軌跡</div>
<div class="a" style="left:771px;top:485px;width:385px;height:138px;background:#f0f0f0;border:1px solid #c8c8c8;border-radius:8px;box-shadow:0 4px 14px rgba(0,0,0,.25)"></div>
<div class="t" id="t82" style="left:775px;transform-origin:left center;top:491.0px;font-size:12px;font-family:'Liberation Sans',sans-serif;color:#8c8c8c;transform:scale(0.8333,1.0000);">ディレクトリ</div>
<div class="t" id="t83" style="left:783px;transform-origin:left center;top:519.0px;font-size:12px;font-family:'Liberation Sans',sans-serif;color:#000;transform:scale(0.8333,1.0000);">ディレクトリ</div>
<div class="a" style="left:777px;top:548px;width:374px;height:41px;border:1px solid #dcdcdc"></div>
<div class="t" id="t84" style="left:785px;transform-origin:left center;top:541.0px;font-size:12px;font-family:'Liberation Sans',sans-serif;color:#000;">一時保存</div>
<div class="t" id="t85" style="left:792px;transform-origin:left center;top:560.0px;font-size:12px;font-family:'Liberation Sans',sans-serif;color:#000;">一時保存</div>
<div class="a" style="left:778px;top:595px;width:259px;height:21px;border:1px solid #d0d0d0;border-radius:4px;background:#fdfdfd"></div>
<div class="a" style="left:1053px;top:595px;width:85px;height:21px;border:1px solid #d0d0d0;border-radius:4px;background:#fdfdfd"></div>
<div class="t" id="t86" style="left:1097px;transform-origin:left center;top:599.0px;font-size:12px;font-family:'Liberation Sans',sans-serif;color:#000;transform:scale(0.9167,1.0000);">完了</div>
<div class="a" style="left:815px;top:467px;width:297px;height:146px;background:#f0f0f0;border:1px solid #b8b8b8;border-radius:8px;box-shadow:0 8px 24px rgba(0,0,0,.35);overflow:hidden"><div class="a" style="left:0;top:0;width:297px;height:25px;background:#f1f3f9"></div><div class="a" style="left:0;top:25px;width:297px;height:78px;background:#fff"></div></div>
<div class="t" id="t87" style="left:819px;transform-origin:left center;top:474.0px;font-size:12px;font-family:'Liberation Sans',sans-serif;color:#000;transform:scale(0.8889,1.0000);">ご確認</div>
<svg class="a" style="left:1091px;top:473px" width="13" height="13"><path d="M1 1L12 12M12 1L1 12" stroke="#222" stroke-width="1.2"/></svg>
<svg class="a" style="left:835px;top:515px" width="33" height="33" viewBox="0 0 33 33"><defs><linearGradient id="ig" x1="0" y1="0" x2="1" y2="1"><stop offset="0" stop-color="#3aa0f0"/><stop offset="1" stop-color="#0a60c8"/></linearGradient></defs><circle cx="16.5" cy="16.5" r="16" fill="url(#ig)"/><rect x="15.4" y="13.5" width="2.2" height="11.5" fill="#fff"/><circle cx="16.5" cy="9.3" r="1.5" fill="#fff"/></svg>
<div class="t" id="t88" style="left:877px;transform-origin:left center;top:526.0px;font-size:12px;font-family:'Liberation Sans',sans-serif;color:#000;transform:scale(0.7518,1.0000);">NTFSディレクトリ構造解析を完了いたしました。</div>
<div class="a" style="left:1023px;top:581px;width:73px;height:21px;border:1.6px solid #0a6ed8;border-radius:4px;background:#fdfdfd"></div>
<div class="t" id="t89" style="left:1059.5px;transform-origin:left center;top:585.5px;font-size:12px;font-family:'Liberation Sans',sans-serif;color:#000;transform:scale(0.9802,1.0000);transform-origin:center;margin-left:-8.5px">OK</div>
<div class="a" style="left:1174px;top:206px;width:394px;height:195px;background:#000;border-left:1px solid #7a7a7a;border-top:1px solid #7a7a7a;border-right:1px solid #fff;border-bottom:1px solid #fff"></div>
<div class="a" style="left:1180px;top:219px;width:11px;height:11px;border:1.3px solid #fff;border-radius:50%"></div>
<div class="t" id="t90" style="left:1199px;transform-origin:left center;top:218.5px;font-size:12px;font-family:'Liberation Sans',sans-serif;color:#fff;transform:scale(0.8889,1.0000);">各パラメータ</div>
<div class="t" id="t91" style="left:1235px;transform-origin:left center;top:243.0px;font-size:12px;font-family:'Liberation Sans',sans-serif;color:#fff;">温度計</div>
<svg class="a" style="left:1236px;top:268px" width="130" height="9"><rect x="0.5" y="0.5" width="8" height="8" fill="none" stroke="#fff"/><rect x="10.5" y="0.5" width="8" height="8" fill="none" stroke="#fff"/><rect x="20.5" y="0.5" width="8" height="8" fill="none" stroke="#fff"/><rect x="30.5" y="0.5" width="8" height="8" fill="none" stroke="#fff"/><rect x="40.5" y="0.5" width="8" height="8" fill="none" stroke="#fff"/><rect x="50.5" y="0.5" width="8" height="8" fill="none" stroke="#fff"/><rect x="60.5" y="0.5" width="8" height="8" fill="none" stroke="#fff"/><rect x="70.5" y="0.5" width="8" height="8" fill="none" stroke="#fff"/><rect x="80.5" y="0.5" width="8" height="8" fill="none" stroke="#fff"/><rect x="90.5" y="0.5" width="8" height="8" fill="none" stroke="#fff"/><rect x="100.5" y="0.5" width="8" height="8" fill="none" stroke="#fff"/><rect x="110.5" y="0.5" width="8" height="8" fill="none" stroke="#fff"/><rect x="120.5" y="0.5" width="8" height="8" fill="none" stroke="#fff"/></svg>
<div class="a" style="left:1245px;top:284px;width:231px;height:1px;background:repeating-linear-gradient(90deg,#fff 0 5px,transparent 5px 6px)"></div>
<div class="t" id="t92" style="left:1235px;transform-origin:left center;top:290.5px;font-size:12px;font-family:'Liberation Sans',sans-serif;color:#fff;transform:scale(0.9225,1.0000);">C</div>
<div class="t" id="t93" style="left:1485px;transform-origin:left center;top:290.5px;font-size:12px;font-family:'Liberation Sans',sans-serif;color:#fff;transform:scale(0.9225,1.0000);">H</div>
<div class="a" style="left:1245px;top:308px;width:165px;height:1px;background:repeating-linear-gradient(90deg,#fff 0 5px,transparent 5px 6px)"></div>
<div class="a" style="left:1360px;top:303px;width:1px;height:12px;background:#fff"></div>
<div class="a" style="left:1410px;top:306px;width:66px;height:5px;background:repeating-linear-gradient(90deg,transparent 0 2px,#fff 2px 3px,transparent 3px 6px)"></div>
<div class="a" style="left:1410px;top:308px;width:66px;height:1px;background:repeating-linear-gradient(90deg,#fff 0 5px,transparent 5px 6px)"></div>
<div class="t" id="t94" style="left:1235px;transform-origin:left center;top:327.0px;font-size:12px;font-family:'Liberation Sans',sans-serif;color:#fff;">出力計</div>
<div class="a" style="left:1236px;top:351px;width:9px;height:10px;border:1px solid #fff"></div>
<div class="a" style="left:1245px;top:368px;width:231px;height:1px;background:repeating-linear-gradient(90deg,#fff 0 5px,transparent 5px 6px)"></div>
<div class="t" id="t95" style="left:1235px;transform-origin:left center;top:374.5px;font-size:12px;font-family:'Liberation Sans',sans-serif;color:#fff;transform:scale(1.0467,1.0000);">L</div>
<div class="t" id="t96" style="left:1485px;transform-origin:left center;top:374.5px;font-size:12px;font-family:'Liberation Sans',sans-serif;color:#fff;transform:scale(0.9225,1.0000);">H</div>
<div class="a" style="left:1245px;top:392px;width:133px;height:1px;background:repeating-linear-gradient(90deg,#fff 0 5px,transparent 5px 6px)"></div>
<div class="a" style="left:1378px;top:390px;width:100px;height:5px;background:repeating-linear-gradient(90deg,transparent 0 2px,#fff 2px 3px,transparent 3px 6px)"></div>
<div class="a" style="left:1378px;top:392px;width:100px;height:1px;background:repeating-linear-gradient(90deg,#fff 0 5px,transparent 5px 6px)"></div>
<div class="a" style="left:1174px;top:409px;width:394px;height:195px;background:#000;border-left:1px solid #7a7a7a;border-top:1px solid #7a7a7a;border-right:1px solid #fff;border-bottom:1px solid #fff"></div>
<div class="a" style="left:1180px;top:422px;width:11px;height:11px;background:#fff;border-radius:50%"></div>
<div class="t" id="t97" style="left:1199px;transform-origin:left center;top:422.0px;font-size:12px;font-family:'Liberation Sans',sans-serif;color:#fff;">速度計</div>
<div class="t" id="t98" style="left:1384.5px;transform-origin:left center;top:439.0px;font-size:126px;font-family:'Liberation Sans',sans-serif;color:#fff;transform:scale(0.8562,1.0300);">0</div>
<div class="t" id="t99" style="left:1477px;transform-origin:left center;top:544.0px;font-size:32px;font-family:'Liberation Mono',monospace;color:#fff;transform:scale(0.9243,1.4000);font-weight:bold">MB/s</div>
<div class="t" id="t100" style="left:1330px;transform-origin:left center;top:572.5px;font-size:12px;font-family:'Liberation Mono',monospace;color:#fff;transform:scale(0.9403,1.0000);">強気 &lt;=&gt; 弱気</div>
<div class="t" id="t101" style="left:1181px;transform-origin:left center;top:588.0px;font-size:12px;font-family:'Liberation Mono',monospace;color:#fff;transform:scale(0.7131,1.0000);">[O_5] [O_4] [O_3] [O_2] [O_1] [O_0] &lt;=&gt;[U_0] [U_1] [U_2] [U_3] [U_4] [U_5]</div>
<div class="a" style="left:1174px;top:611px;width:394px;height:195px;background:#000;border-left:1px solid #7a7a7a;border-top:1px solid #7a7a7a;border-right:1px solid #fff;border-bottom:1px solid #fff"></div>
<div class="a" style="left:1180px;top:624px;width:11px;height:11px;background:#fff;border-radius:50%"></div>
<div class="t" id="t102" style="left:1199px;transform-origin:left center;top:623.5px;font-size:12px;font-family:'Liberation Sans',sans-serif;color:#fff;transform:scale(0.9167,1.0000);">速度調整シフトゲージ</div>
<div class="t" id="t103" style="left:1232px;transform-origin:left center;top:685.5px;font-size:48px;font-family:'Liberation Sans',sans-serif;color:#22ee22;transform:scale(0.6366,1.1300);-webkit-text-stroke:0.6px #22ee22">1</div>
<div class="t" id="t104" style="left:1265px;transform-origin:left center;top:695.0px;font-size:38px;font-family:'Liberation Sans',sans-serif;color:#fff;transform:scale(0.8041,1.0700);-webkit-text-stroke:0.5px #fff">2</div>
<div class="t" id="t105" style="left:1301px;transform-origin:left center;top:695.0px;font-size:38px;font-family:'Liberation Sans',sans-serif;color:#fff;transform:scale(0.8041,1.0700);-webkit-text-stroke:0.5px #fff">3</div>
<div class="t" id="t106" style="left:1337px;transform-origin:left center;top:695.0px;font-size:38px;font-family:'Liberation Sans',sans-serif;color:#fff;transform:scale(0.8041,1.0700);-webkit-text-stroke:0.5px #fff">4</div>
<div class="t" id="t107" style="left:1372px;transform-origin:left center;top:695.0px;font-size:38px;font-family:'Liberation Sans',sans-serif;color:#fff;transform:scale(0.8041,1.0700);-webkit-text-stroke:0.5px #fff">5</div>
<div class="t" id="t108" style="left:1408px;transform-origin:left center;top:695.0px;font-size:38px;font-family:'Liberation Sans',sans-serif;color:#fff;transform:scale(0.8041,1.0700);-webkit-text-stroke:0.5px #fff">6</div>
<div class="t" id="t109" style="left:1444px;transform-origin:left center;top:695.0px;font-size:38px;font-family:'Liberation Sans',sans-serif;color:#fff;transform:scale(0.8041,1.0700);-webkit-text-stroke:0.5px #fff">7</div>
<div class="t" id="t110" style="left:1480px;transform-origin:left center;top:695.0px;font-size:38px;font-family:'Liberation Sans',sans-serif;color:#fff;transform:scale(0.8041,1.0700);-webkit-text-stroke:0.5px #fff">8</div>
<div class="t" id="t111" style="left:1210px;transform-origin:left center;top:731.5px;font-size:36px;font-family:'Liberation Sans',sans-serif;color:#fff;transform:scale(0.8986,1.0600);-webkit-text-stroke:0.5px #fff">L</div>
<div class="t" id="t112" style="left:1507px;transform-origin:left center;top:731.5px;font-size:36px;font-family:'Liberation Sans',sans-serif;color:#fff;transform:scale(0.7692,1.0600);-webkit-text-stroke:0.5px #fff">H</div>
<div class="a" style="left:1172px;top:817px;width:401px;height:88px;border:1px solid #dcdcdc;border-right-color:#fff;border-bottom-color:#fff"></div>
<div class="a" style="left:1178px;top:810px;width:56px;height:14px;background:#f0f0f0"></div>
<div class="t" id="t113" style="left:1181px;transform-origin:left center;top:811.0px;font-size:12px;font-family:'Liberation Sans',sans-serif;color:#000;">進捗状況</div>
<div class="a" style="left:1179px;top:832px;width:385px;height:66px;background:#f0f0f0;border-left:1px solid #a0a0a0;border-top:1px solid #a0a0a0;border-right:1px solid #fff;border-bottom:1px solid #fff"></div>
<div class="t" id="t114" style="left:1181px;transform-origin:left center;top:833.0px;font-size:12px;font-family:'Liberation Sans',sans-serif;color:#000;transform:scale(0.9317,1.0000);">不良セクタ危険予知: 正常に動作しております 人工知能(RE.C.O.AI)機能を自</div>
<div class="a" style="left:1177px;top:912px;width:172px;height:19px;border:1px solid #cfcfcf;border-bottom-color:#b8b8b8;border-radius:4px;background:#fdfdfd"></div>
<div class="t" id="t115" style="left:1194.5px;transform-origin:left center;top:915.0px;font-size:12px;font-family:'Liberation Sans',sans-serif;color:#000;transform:scale(0.9514,1.0000);">不良セクタ危険予知の設定</div>
<div class="a" style="left:1358px;top:912px;width:112px;height:19px;border:1px solid #cfcfcf;border-bottom-color:#b8b8b8;border-radius:4px;background:#fdfdfd"></div>
<div class="t" id="t116" style="left:1372.0px;transform-origin:left center;top:915.0px;font-size:12px;font-family:'Liberation Sans',sans-serif;color:#000;">復旧エンジニア</div>
<div class="a" style="left:1483px;top:912px;width:87px;height:19px;border:1px solid #cfcfcf;border-bottom-color:#b8b8b8;border-radius:4px;background:#fdfdfd"></div>
<div class="t" id="t117" style="left:1508.5px;transform-origin:left center;top:915.0px;font-size:12px;font-family:'Liberation Sans',sans-serif;color:#000;">閉じる</div>
<div class="a" style="left:360px;top:695px;width:263px;height:225px;background:#000;border-left:1px solid #7a7a7a;border-top:1px solid #7a7a7a;border-right:1px solid #fff;border-bottom:1px solid #fff"></div>
<div class="a" style="left:631px;top:695px;width:263px;height:225px;background:#000;border-left:1px solid #7a7a7a;border-top:1px solid #7a7a7a;border-right:1px solid #fff;border-bottom:1px solid #fff"></div>
<div class="a" style="left:902px;top:695px;width:263px;height:225px;background:#000;border-left:1px solid #7a7a7a;border-top:1px solid #7a7a7a;border-right:1px solid #fff;border-bottom:1px solid #fff"></div>
<div class="a" style="left:366px;top:708px;width:11px;height:11px;background:#fff;border-radius:50%"></div>
<div class="t" id="t118" style="left:386px;transform-origin:left center;top:708.0px;font-size:12px;font-family:'Liberation Sans',sans-serif;color:#fff;transform:scale(0.9926,1.0000);">HyperBuffer with HVI</div>
<div class="t" id="t119" style="left:367px;transform-origin:left center;top:738.0px;font-size:14px;font-family:'Liberation Mono',monospace;color:#fff;transform:scale(0.8610,1.0000);">残量(MB)：00000 / 00000 (000 %)</div>
<div class="t" id="t120" style="left:366px;transform-origin:left center;top:756.0px;font-size:12px;font-family:'Liberation Mono',monospace;color:#fff;transform:scale(0.8980,1.0000);">-- AI完全自動ドライブ復旧システム未稼働.</div>
<div class="a" style="left:364px;top:781px;width:9px;height:9px;border:1px solid #fff"></div>
<div class="t" id="t121" style="left:363px;transform-origin:left center;top:792.0px;font-size:12px;font-family:'Liberation Sans',sans-serif;color:#fff;transform:scale(0.8733,1.0000);">E</div>
<div class="a" style="left:373px;top:797px;width:231px;height:1px;background:repeating-linear-gradient(90deg,#fff 0 5px,transparent 5px 6px)"></div>
<div class="t" id="t122" style="left:613px;transform-origin:left center;top:792.0px;font-size:12px;font-family:'Liberation Sans',sans-serif;color:#fff;transform:scale(0.8170,1.0000);">F</div>
<div class="t" id="t123" style="left:366px;transform-origin:left center;top:815.5px;font-size:12px;font-family:'Liberation Sans',sans-serif;color:#fff;transform:scale(0.9456,1.0000);">Head VI</div>
<div class="a" style="left:364px;top:841px;width:9px;height:9px;background:#fff"></div>
<div class="a" style="left:373px;top:857px;width:231px;height:1px;background:repeating-linear-gradient(90deg,#fff 0 5px,transparent 5px 6px)"></div>
<div class="t" id="t124" style="left:363px;transform-origin:left center;top:863.5px;font-size:12px;font-family:'Liberation Sans',sans-serif;color:#fff;transform:scale(0.8972,1.0000);">L</div>
<div class="t" id="t125" style="left:615px;transform-origin:left center;top:863.5px;font-size:12px;font-family:'Liberation Sans',sans-serif;color:#fff;transform:scale(0.8072,1.0000);">H</div>
<div class="t" id="t126" style="left:373px;transform-origin:left center;top:875.5px;font-size:12px;font-family:'Liberation Mono',monospace;color:#fff;transform:scale(0.8756,1.0000);">5----------------20-----40-----120--</div>
<svg class="a" style="left:636px;top:708px" width="12" height="11"><path d="M6 0.5L11.5 10.5H0.5Z" fill="#fff"/></svg>
<div class="t" id="t127" style="left:656px;transform-origin:left center;top:708.0px;font-size:12px;font-family:'Liberation Sans',sans-serif;color:#fff;transform:scale(0.9930,1.0000);">オーバー値 (KB/s)</div>
<div class="t" id="t128" style="left:659px;transform-origin:left center;top:745.5px;font-size:24px;font-family:'Liberation Mono',monospace;color:#fff;transform:scale(0.7290,1.0800);-webkit-text-stroke:0.4px #fff">[OVER_5]</div>
<div class="t" id="t129" style="left:763px;transform-origin:left center;top:745.5px;font-size:24px;font-family:'Liberation Sans',sans-serif;color:#fff;transform:scale(0.9194,1.0800);-webkit-text-stroke:0.4px #fff">011602</div>
<div class="t" id="t130" style="left:659px;transform-origin:left center;top:769.5px;font-size:24px;font-family:'Liberation Mono',monospace;color:#fff;transform:scale(0.7290,1.0800);-webkit-text-stroke:0.4px #fff">[OVER_4]</div>
<div class="t" id="t131" style="left:763px;transform-origin:left center;top:769.5px;font-size:24px;font-family:'Liberation Sans',sans-serif;color:#fff;transform:scale(0.8989,1.0800);-webkit-text-stroke:0.4px #fff">008877</div>
<div class="t" id="t132" style="left:659px;transform-origin:left center;top:793.5px;font-size:24px;font-family:'Liberation Mono',monospace;color:#fff;transform:scale(0.7290,1.0800);-webkit-text-stroke:0.4px #fff">[OVER_3]</div>
<div class="t" id="t133" style="left:763px;transform-origin:left center;top:793.5px;font-size:24px;font-family:'Liberation Sans',sans-serif;color:#fff;transform:scale(0.8989,1.0800);-webkit-text-stroke:0.4px #fff">007896</div>
<div class="t" id="t134" style="left:659px;transform-origin:left center;top:817.5px;font-size:24px;font-family:'Liberation Mono',monospace;color:#fff;transform:scale(0.7290,1.0800);-webkit-text-stroke:0.4px #fff">[OVER_2]</div>
<div class="t" id="t135" style="left:763px;transform-origin:left center;top:817.5px;font-size:24px;font-family:'Liberation Sans',sans-serif;color:#fff;transform:scale(0.8989,1.0800);-webkit-text-stroke:0.4px #fff">006891</div>
<div class="t" id="t136" style="left:659px;transform-origin:left center;top:841.5px;font-size:24px;font-family:'Liberation Mono',monospace;color:#fff;transform:scale(0.7290,1.0800);-webkit-text-stroke:0.4px #fff">[OVER_1]</div>
<div class="t" id="t137" style="left:763px;transform-origin:left center;top:841.5px;font-size:24px;font-family:'Liberation Sans',sans-serif;color:#fff;transform:scale(0.8989,1.0800);-webkit-text-stroke:0.4px #fff">005739</div>
<div class="t" id="t138" style="left:659px;transform-origin:left center;top:865.5px;font-size:24px;font-family:'Liberation Mono',monospace;color:#fff;transform:scale(0.7290,1.0800);-webkit-text-stroke:0.4px #fff">[OVER_0]</div>
<div class="t" id="t139" style="left:763px;transform-origin:left center;top:865.5px;font-size:24px;font-family:'Liberation Sans',sans-serif;color:#fff;transform:scale(0.8989,1.0800);-webkit-text-stroke:0.4px #fff">004703</div>
<svg class="a" style="left:908px;top:708px" width="11" height="10"><path d="M0.8 0.8H10.2L5.5 9.2Z" fill="none" stroke="#fff" stroke-width="1.2"/></svg>
<div class="t" id="t140" style="left:928px;transform-origin:left center;top:708.0px;font-size:12px;font-family:'Liberation Sans',sans-serif;color:#fff;transform:scale(0.9930,1.0000);">アンダー値 (KB/s)</div>
<div class="t" id="t141" style="left:930px;transform-origin:left center;top:745.0px;font-size:24px;font-family:'Liberation Mono',monospace;color:#fff;transform:scale(0.7715,1.0800);-webkit-text-stroke:0.4px #fff">[UNDER_0]</div>
<div class="t" id="t142" style="left:1047px;transform-origin:left center;top:745.0px;font-size:24px;font-family:'Liberation Sans',sans-serif;color:#fff;transform:scale(0.8865,1.0800);-webkit-text-stroke:0.4px #fff">003795</div>
<div class="t" id="t143" style="left:930px;transform-origin:left center;top:769.0px;font-size:24px;font-family:'Liberation Mono',monospace;color:#fff;transform:scale(0.7715,1.0800);-webkit-text-stroke:0.4px #fff">[UNDER_1]</div>
<div class="t" id="t144" style="left:1047px;transform-origin:left center;top:769.0px;font-size:24px;font-family:'Liberation Sans',sans-serif;color:#fff;transform:scale(0.8865,1.0800);-webkit-text-stroke:0.4px #fff">003018</div>
<div class="t" id="t145" style="left:930px;transform-origin:left center;top:793.0px;font-size:24px;font-family:'Liberation Mono',monospace;color:#fff;transform:scale(0.7715,1.0800);-webkit-text-stroke:0.4px #fff">[UNDER_2]</div>
<div class="t" id="t146" style="left:1047px;transform-origin:left center;top:793.0px;font-size:24px;font-family:'Liberation Sans',sans-serif;color:#fff;transform:scale(0.8865,1.0800);-webkit-text-stroke:0.4px #fff">002287</div>
<div class="t" id="t147" style="left:930px;transform-origin:left center;top:817.0px;font-size:24px;font-family:'Liberation Mono',monospace;color:#fff;transform:scale(0.7715,1.0800);-webkit-text-stroke:0.4px #fff">[UNDER_3]</div>
<div class="t" id="t148" style="left:1047px;transform-origin:left center;top:817.0px;font-size:24px;font-family:'Liberation Sans',sans-serif;color:#fff;transform:scale(0.8865,1.0800);-webkit-text-stroke:0.4px #fff">001618</div>
<div class="t" id="t149" style="left:930px;transform-origin:left center;top:841.0px;font-size:24px;font-family:'Liberation Mono',monospace;color:#fff;transform:scale(0.7715,1.0800);-webkit-text-stroke:0.4px #fff">[UNDER_4]</div>
<div class="t" id="t150" style="left:1047px;transform-origin:left center;top:841.0px;font-size:24px;font-family:'Liberation Sans',sans-serif;color:#fff;transform:scale(0.8865,1.0800);-webkit-text-stroke:0.4px #fff">001095</div>
<div class="t" id="t151" style="left:930px;transform-origin:left center;top:865.0px;font-size:24px;font-family:'Liberation Mono',monospace;color:#fff;transform:scale(0.7715,1.0800);-webkit-text-stroke:0.4px #fff">[UNDER_5]</div>
<div class="t" id="t152" style="left:1047px;transform-origin:left center;top:865.0px;font-size:24px;font-family:'Liberation Sans',sans-serif;color:#fff;transform:scale(0.8865,1.0800);-webkit-text-stroke:0.4px #fff">000707</div></body></html>
